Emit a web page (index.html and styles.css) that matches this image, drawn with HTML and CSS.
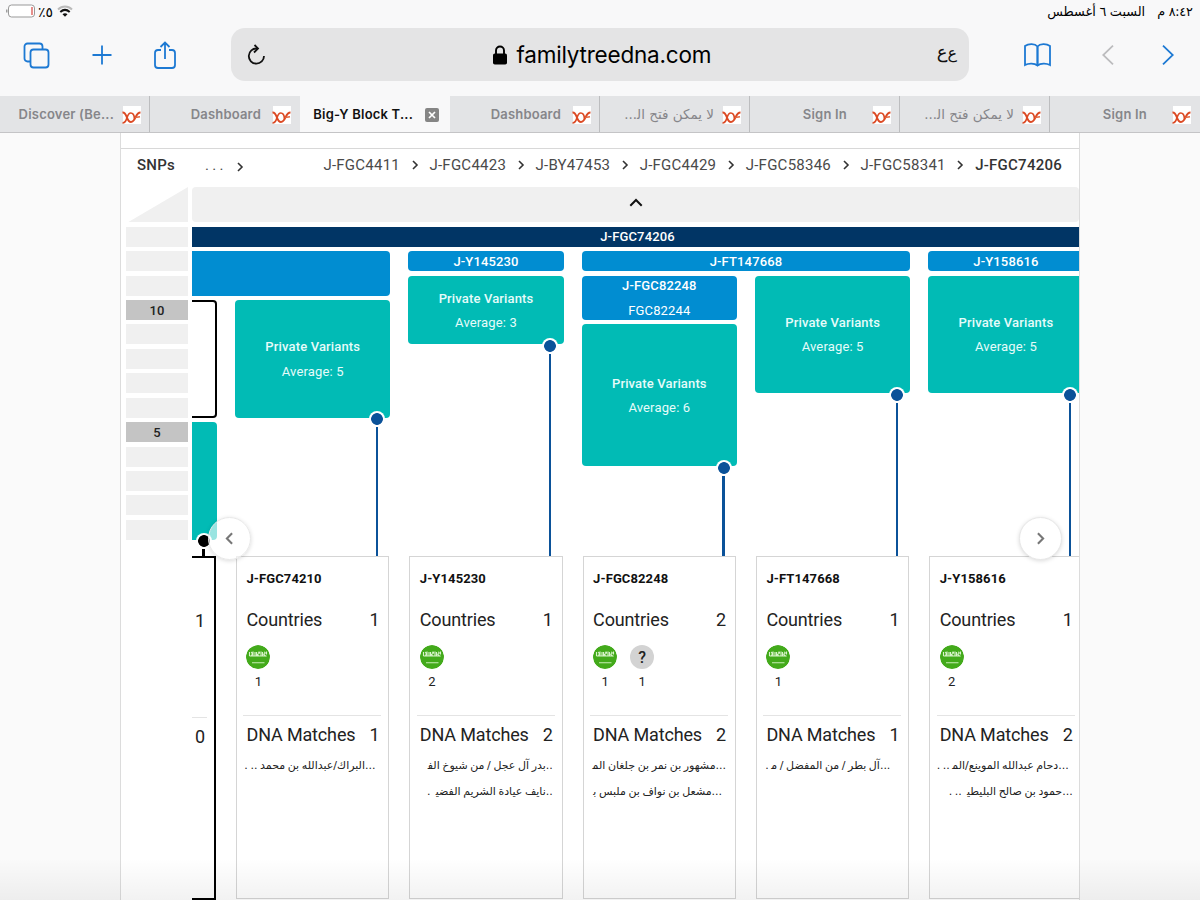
FILE: index.html
```html
<!DOCTYPE html>
<html lang="en">
<head>
    <meta charset="utf-8">
    <title>Big-Y Block Tree</title>
    <link rel="stylesheet" href="styles.css">
</head>
<body>
    <!-- shared icons -->
    <svg class="defs" width="0" height="0">
        <symbol id="dna" viewBox="0 0 19 19">
            <rect x="1" width="18" height="18" fill="#fff"/>
            <path d="M.5 6.500C5.500 6 4 16 9 16c5 0 4-9.500 9.500-9.500" fill="none" stroke="#dc4a24" stroke-width="1.900"/>
            <path d="M.5 17C6 17 4 7 8.800 7c3.500 0 3.500 4 3.700 6" fill="none" stroke="#dc4a24" stroke-width="1.700"/>
            <path d="M13 11.500l5-.7" stroke="#e2653f" stroke-width="1.400"/>
        </symbol>
        <symbol id="chev" viewBox="0 0 8 10">
            <path d="M2 1l4 4-4 4" fill="none" stroke="currentColor" stroke-width="1.600"/>
        </symbol>
        <symbol id="flag" viewBox="0 0 24 24">
            <circle cx="12" cy="12" r="12" fill="#43aa1b"/>
            <path d="M3.500 7v4M5 7.500c1.500-1 1.500 3 0 3.500M7 6.500v4.500h2V7M10.500 7v4M12 7.500c2-1.500 2 1 .2 1.500s0 2 1.300 2M15 6.500v4.500h1.500V7M18 7c2 0 1 2 0 2s1 2.500 2.500 2M20.500 6.500v3M3.500 11h17" fill="none" stroke="#d9f3cb" stroke-width="1.100"/>
            <path d="M6 17.700h12.500" stroke="#c6ecb4" stroke-width="1.100"/>
        </symbol>
    </svg>

    <header class="browser">
        <div class="status">
            <div class="status-side">
                <svg width="30" height="14" viewBox="0 0 30 14">
                    <rect x="2.500" y="1" width="26" height="12" rx="3" fill="#fff" stroke="#999" stroke-width="1"/>
                    <path d="M.8 5.500v3" stroke="#888" stroke-width="1.200"/>
                    <path d="M26 3v8" stroke="#d9534f" stroke-width="1.300"/>
                </svg>
                <bdo dir="ltr" class="percent">٪٥</bdo>
                <svg class="wifi" width="16" height="12" viewBox="0 0 16 12">
                    <path d="M1 4.500c4-4 10-4 14 0" fill="none" stroke="#bbb" stroke-width="1.900"/>
                    <path d="M3.300 7c3-2.700 6.400-2.700 9.400 0" fill="none" stroke="#111" stroke-width="2"/>
                    <path d="M5.500 9.200c1.500-1.300 3.500-1.300 5 0L8 11.700z" fill="#111"/>
                </svg>
            </div>
            <div class="status-side" dir="rtl"><span>٨:٤٢ م</span><span>السبت ٦ أغسطس</span></div>
        </div>

        <div class="toolbar">
            <div class="tools">
                <svg width="27" height="27" viewBox="0 0 27 27">
                    <path d="M7 19.500H4.500a3 3 0 0 1-3-3V4.500a3 3 0 0 1 3-3h12a3 3 0 0 1 3 3V7"/>
                    <rect x="7.500" y="7.500" width="18" height="18" rx="3"/>
                </svg>
                <svg width="20" height="20" viewBox="0 0 20 20"><path d="M10 .5v19M.5 10h19"/></svg>
                <svg width="22" height="28" viewBox="0 0 22 28">
                    <path d="M7 9H4a3 3 0 0 0-3 3v12a3 3 0 0 0 3 3h14a3 3 0 0 0 3-3V12a3 3 0 0 0-3-3h-3M11 18V1.500M6.500 6L11 1.500 15.500 6"/>
                </svg>
            </div>
            <div class="address">
                <svg width="18" height="22" viewBox="0 0 18 22">
                    <path d="M10 4.500A7.600 7.600 0 1 0 17 12M7.500 1l3.500 3.500-4 4" fill="none" stroke="#111" stroke-width="1.800"/>
                </svg>
                <div class="host">
                    <svg width="14" height="20" viewBox="0 0 14 20">
                        <rect y="8.500" width="14" height="11" rx="1.800" fill="#000"/>
                        <path d="M3 9V5.500a4 4 0 0 1 8 0V9" fill="none" stroke="#000" stroke-width="1.900"/>
                    </svg>
                    <span>familytreedna.com</span>
                </div>
                <span class="reader" dir="rtl"><small>ع</small>&zwnj;ع</span>
            </div>
            <div class="tools tools-end">
                <svg width="27" height="24" viewBox="0 0 27 24">
                    <path d="M13.500 3.500C11 .5 4.500.5 1 3v19c3.500-2 9.500-2 12.500.5 3-2.500 9-2.500 12.500-.5V3C22.500.5 16 .5 13.500 3.500zv19"/>
                    <path d="M13.500 3.500v19"/>
                </svg>
                <svg class="off" width="12" height="20" viewBox="0 0 12 20"><path d="M11 .7L1.200 10 11 19.300"/></svg>
                <svg width="12" height="20" viewBox="0 0 12 20"><path d="M1 .7l9.800 9.300L1 19.300"/></svg>
            </div>
        </div>

        <nav class="tabs">
            <div class="tab tab-wide"><span>Discover (Be...</span><svg><use href="#dna"/></svg></div>
            <div class="tab"><span>Dashboard</span><svg><use href="#dna"/></svg></div>
            <div class="tab tab-active"><span>Big-Y Block T...</span>
                <svg class="close" viewBox="0 0 14 14"><rect width="14" height="14" rx="2" fill="#858585"/><path d="M4 4l6 6M10 4l-6 6" stroke="#fff" stroke-width="1.700"/></svg>
            </div>
            <div class="tab"><span>Dashboard</span><svg><use href="#dna"/></svg></div>
            <div class="tab tab-wide"><span class="ar" dir="rtl">لا يمكن فتح ال&zwj;...</span><svg><use href="#dna"/></svg></div>
            <div class="tab tab-short"><span>Sign In</span><svg><use href="#dna"/></svg></div>
            <div class="tab tab-wide"><span class="ar" dir="rtl">لا يمكن فتح ال&zwj;...</span><svg><use href="#dna"/></svg></div>
            <div class="tab tab-short"><span>Sign In</span><svg><use href="#dna"/></svg></div>
        </nav>
    </header>

    <main class="page">
        <div class="crumbs">
            <b>SNPs</b>
            <span class="dots">...</span>
            <svg class="first"><use href="#chev"/></svg>
            <div class="path">
                <span>J-FGC4411</span><svg><use href="#chev"/></svg>
                <span>J-FGC4423</span><svg><use href="#chev"/></svg>
                <span>J-BY47453</span><svg><use href="#chev"/></svg>
                <span>J-FGC4429</span><svg><use href="#chev"/></svg>
                <span>J-FGC58346</span><svg><use href="#chev"/></svg>
                <span>J-FGC58341</span><svg><use href="#chev"/></svg>
                <b>J-FGC74206</b>
            </div>
        </div>

        <div class="chart">
            <div class="ruler">
                <div class="corner"></div>
                <i></i><i></i><i></i><i class="mark">10</i><i></i><i></i><i></i><i></i><i class="mark">5</i><i></i><i></i><i></i><i></i>
            </div>

            <div class="view">
                <div class="up"><svg width="14" height="9" viewBox="0 0 14 9"><path d="M1.300 7.700L7 2l5.700 5.700" fill="none" stroke="#111" stroke-width="2"/></svg></div>

                <div class="tree">
                    <div class="block root">J-FGC74206</div>
                    <div class="block blue first-blue"></div>
                    <div class="block blue c3 r2">J-Y145230</div>
                    <div class="block blue c45 r2">J-FT147668</div>
                    <div class="block blue c6 r2">J-Y158616</div>
                    <div class="block blue c4 r34">J-FGC82248<span>FGC82244</span></div>

                    <div class="block outline"></div>
                    <div class="block teal cut"></div>
                    <div class="block teal c2 r48">Private Variants<span>Average: 5</span></div>
                    <div class="block teal c3 r35">Private Variants<span>Average: 3</span></div>
                    <div class="block teal c4 r510">Private Variants<span>Average: 6</span></div>
                    <div class="block teal c5 r37">Private Variants<span>Average: 5</span></div>
                    <div class="block teal c6 r37">Private Variants<span>Average: 5</span></div>

                    <div class="stem stem-black c1 s14"></div>
                    <div class="stem c2 s9"></div>
                    <div class="stem c3 s6"></div>
                    <div class="stem c4 s11"></div>
                    <div class="stem c5 s8"></div>
                    <div class="stem c6 s8"></div>
                </div>

                <div class="cards">
                    <section class="card card-cut">
                        <div class="countries"><h3><b>1</b></h3></div>
                        <h3><b>0</b></h3>
                    </section>
                    <section class="card">
                        <h2>J-FGC74210</h2>
                        <div class="countries">
                            <h3>Countries <b>1</b></h3>
                            <div class="flags"><div><svg><use href="#flag"/></svg>1</div></div>
                        </div>
                        <h3>DNA Matches <b>1</b></h3>
                        <p dir="rtl" class="in">...البراك/عبدالله بن محمد .. .</p>
                    </section>
                    <section class="card">
                        <h2>J-Y145230</h2>
                        <div class="countries">
                            <h3>Countries <b>1</b></h3>
                            <div class="flags"><div><svg><use href="#flag"/></svg>2</div></div>
                        </div>
                        <h3>DNA Matches <b>2</b></h3>
                        <p dir="rtl">..بدر آل عجل / من شيوخ الف&zwj;</p>
                        <p dir="rtl">..نايف عيادة الشريم الفضي&zwj; &nbsp;.</p>
                    </section>
                    <section class="card">
                        <h2>J-FGC82248</h2>
                        <div class="countries">
                            <h3>Countries <b>2</b></h3>
                            <div class="flags"><div><svg><use href="#flag"/></svg>1</div><div><em>?</em>1</div></div>
                        </div>
                        <h3>DNA Matches <b>2</b></h3>
                        <p dir="rtl">...مشهور بن نمر بن جلغان الم&zwj;</p>
                        <p dir="rtl" class="in">...مشعل بن نواف بن ملبس ب&zwj;</p>
                    </section>
                    <section class="card">
                        <h2>J-FT147668</h2>
                        <div class="countries">
                            <h3>Countries <b>1</b></h3>
                            <div class="flags"><div><svg><use href="#flag"/></svg>1</div></div>
                        </div>
                        <h3>DNA Matches <b>1</b></h3>
                        <p dir="rtl" class="in2">...آل بطر / من المفضل / م&zwj; .</p>
                    </section>
                    <section class="card">
                        <h2>J-Y158616</h2>
                        <div class="countries">
                            <h3>Countries <b>1</b></h3>
                            <div class="flags"><div><svg><use href="#flag"/></svg>2</div></div>
                        </div>
                        <h3>DNA Matches <b>2</b></h3>
                        <p dir="rtl" class="in">...دحام عبدالله الموينع/الم&zwj; .. .</p>
                        <p dir="rtl">...حمود بن صالح البليطي&zwj; &nbsp;.. .</p>
                    </section>
                </div>

                <button class="nav prev"><svg><use href="#chev"/></svg></button>
                <button class="nav next"><svg><use href="#chev"/></svg></button>
            </div>
        </div>
    </main>
    <div class="fade"></div>
</body>
</html>
```
FILE: styles.css
```css
* {
    box-sizing: border-box;
}

body {
    margin: 0;
    width: 1200px;
    height: 900px;
    overflow: hidden;
    position: relative;
    background: #fafafa;
    font-family: Roboto, "DejaVu Sans", sans-serif;
    color: #222;
}

.defs {
    position: absolute;
}

/* browser chrome */
.browser {
    height: 133px;
    background: #f8f8f9;
    border-bottom: 1px solid #c4c4c6;
    font-family: Inter, "DejaVu Sans", sans-serif;
}

.status {
    height: 28px;
    padding: 0 7px 6px 6px;
    display: flex;
    justify-content: space-between;
    align-items: center;
    font-size: 12.8px;
    color: #000;
}

.status-side {
    display: flex;
    align-items: center;
    gap: 12px;
}

.status-side .percent {
    margin-left: -10px;
    font-size: 14px;
}

.status-side .wifi {
    margin-left: -8px;
}

.toolbar {
    height: 68px;
    display: flex;
    align-items: flex-start;
}

.tools {
    width: 231px;
    height: 54px;
    padding-left: 23px;
    display: flex;
    align-items: center;
    gap: 42px;
}

.tools svg {
    fill: none;
    stroke: #1d79d3;
    stroke-width: 1.8;
}

.tools svg:nth-child(3) {
    margin-bottom: 1px;
}

.tools-end {
    padding-left: 55px;
    gap: 51px;
}

.tools-end svg:nth-child(3) {
    margin: 0 0 0 -3px;
}

.tools .off {
    stroke: #bcbcbe;
}

.address {
    width: 738px;
    height: 53px;
    padding: 0 12px 0 16px;
    border-radius: 14px;
    background: #e4e4e5;
    display: flex;
    align-items: center;
    justify-content: space-between;
}

.host {
    display: flex;
    align-items: center;
    gap: 9px;
    padding-left: 3px;
    font-size: 22.5px;
    letter-spacing: -0.2px;
    color: #000;
}

.reader {
    padding-bottom: 6px;
    font-size: 18px;
    color: #111;
}

.reader small {
    font-size: 16px;
}

.tabs {
    display: flex;
    height: 36px;
}

.tab {
    width: 150px;
    padding-right: 8px;
    display: flex;
    align-items: center;
    justify-content: flex-end;
    gap: 11px;
    background: #e3e4e6;
    border-right: 1px solid #bcbdbf;
    color: #86868a;
    font-size: 13px;
    font-weight: 600;
    letter-spacing: 0.2px;
    white-space: nowrap;
}

.tab:nth-child(2),
.tab:last-child,
.tab-active {
    border-right-color: transparent;
}

.tab svg {
    width: 19px;
    height: 19px;
    margin-top: 2px;
}

.tab-wide {
    gap: 8px;
}

.tab-short {
    gap: 25px;
}

.tab .ar {
    font: 13.5px "DejaVu Sans", sans-serif;
    letter-spacing: 0;
}

.tab-active {
    background: #f8f8f9;
    color: #111;
    gap: 12px;
    padding-right: 10px;
}

.tab .close {
    width: 14px;
    height: 14px;
}

/* page */
.page {
    width: 960px;
    height: 767px;
    margin-left: 120px;
    padding-top: 15px;
    background: #fff;
    border: solid #dcdcdc;
    border-width: 0 1px;
    overflow: hidden;
}

.crumbs {
    height: 39px;
    padding: 0 17px 6px 16px;
    border-top: 1px solid #d8d8d8;
    display: flex;
    align-items: center;
    font-size: 15px;
    letter-spacing: 0.25px;
    color: #4a4a4a;
}

.crumbs b {
    font-weight: 500;
    color: #333;
}

.crumbs svg {
    width: 8px;
    height: 10px;
    color: #333;
}

.dots {
    margin-left: 30px;
    letter-spacing: 3.3px;
}

.crumbs .first {
    margin-left: 9px;
    margin-top: 3px;
}

.path {
    margin-left: auto;
    display: flex;
    align-items: center;
    gap: 10.7px;
}

.chart {
    display: flex;
    gap: 4px;
    padding-left: 5px;
}

.ruler {
    width: 62px;
    display: flex;
    flex-direction: column;
    gap: 4.43px;
}

.ruler i {
    height: 20px;
    background: #f0f0f0;
    font: 500 13px/21px Roboto, sans-serif;
    letter-spacing: 0.2px;
    text-align: center;
}

.ruler .mark {
    background: #c4c4c4;
}

.corner {
    height: 35.3px;
    margin-left: 2px;
    background: #f0f0f0;
    clip-path: polygon(100% 0, 100% 100%, 0 100%);
}

.view {
    width: 887px;
    position: relative;
    overflow: hidden;
}

.up {
    height: 35px;
    margin-bottom: 4.7px;
    padding-bottom: 5px;
    border-radius: 4px;
    background: #f0f0f0;
    display: flex;
    align-items: center;
    justify-content: center;
}

.tree,
.cards {
    display: grid;
    grid-template-columns: 25.2px repeat(5, 155.5px);
    column-gap: 17.8px;
}

.tree {
    grid-template-rows: repeat(13, 20px) 11.7px;
    row-gap: 4.43px;
}

.block {
    padding-top: 2px;
    display: flex;
    flex-direction: column;
    justify-content: center;
    border-radius: 4px;
    color: #fff;
    font-size: 13px;
    font-weight: 500;
    line-height: 24.4px;
    letter-spacing: 0.15px;
    text-align: center;
}

.block span {
    font-weight: 400;
}

.root {
    grid-area: 1 / 1 / 2 / 7;
    width: 891px;
    background: #013565;
    border-radius: 0;
}

.blue { background: #018dd1; }
.teal { background: #01bbb5; color: #e6fbfa; }

.first-blue {
    grid-area: 2 / 1 / 4 / 3;
    border-radius: 0 4px 4px 0;
}

.outline {
    grid-area: 4 / 1 / 9 / 2;
    border: 2.5px solid #000;
    border-left: 0;
    border-radius: 0 4px 4px 0;
}

.cut {
    grid-area: 9 / 1 / 14 / 2;
    border-radius: 0 4px 4px 0;
}

.c1 { grid-column: 1; }
.c2 { grid-column: 2; }
.c3 { grid-column: 3; }
.c4 { grid-column: 4; }
.c5 { grid-column: 5; }
.c6 { grid-column: 6; }
.c45 { grid-column: 4 / 6; }

.r2 { grid-row: 2; }
.r34 { grid-row: 3 / 5; }
.r35 { grid-row: 3 / 6; }
.r37 { grid-row: 3 / 8; }
.r48 { grid-row: 4 / 9; }
.r510 { grid-row: 5 / 11; }

/* line with the dot on top, hanging from a block */
.stem {
    --c: #0b5299;
    position: relative;
    justify-self: end;
    width: 2.5px;
    margin-right: 12.3px;
    background: var(--c);
    border-top: 5px solid #fff;
}

.stem::before {
    content: '';
    position: absolute;
    top: -16px;
    left: -6.75px;
    width: 16px;
    height: 16px;
    border-radius: 50%;
    background: radial-gradient(circle, var(--c) 5.5px, #fff 6.2px);
}

.stem-black { --c: #000; }

.s6 { grid-row: 6 / 15; }
.s8 { grid-row: 8 / 15; }
.s9 { grid-row: 9 / 15; }
.s11 { grid-row: 11 / 15; }
.s14 { grid-row: 14; }

/* cards */
.card {
    height: 343px;
    margin: 0 1px;
    padding: 12px 7px 0 6.5px;
    border: 1.5px solid #d5d5d5;
    color: #222;
}

.card h2 {
    margin: 0 3px;
    font-size: 13px;
    line-height: 20px;
    font-weight: 700;
    letter-spacing: 0.1px;
    color: #111;
}

.card h3 {
    margin: 0 2px 0 3px;
    display: flex;
    justify-content: space-between;
    font-size: 18px;
    line-height: 26px;
    font-weight: 400;
    letter-spacing: -0.15px;
}

.card b {
    font-weight: 400;
}

.countries {
    height: 127px;
    padding-top: 18px;
    margin-bottom: 6px;
    border-bottom: 1px solid #e4e4e4;
}

.flags {
    margin: 12px 3px 0;
    display: flex;
    gap: 13px;
}

.flags div {
    width: 24px;
    text-align: center;
    font-size: 13px;
    line-height: 25px;
}

.flags svg,
.flags em {
    display: block;
    width: 24px;
    height: 24px;
    border-radius: 50%;
}

.flags em {
    background: #d3d3d3;
    font: 500 16px/25px Roboto, sans-serif;
}

.card p {
    margin: 5.5px 2px 0;
    height: 21px;
    font: 11px/21px "DejaVu Sans", sans-serif;
    word-spacing: -0.9px;
    white-space: nowrap;
}

.card h3 + p {
    margin-top: 7px;
}

.card .in { margin-right: 6px; }
.card .in2 { margin-right: 11px; }

.card-cut {
    height: 344px;
    margin: 0 1px 0 0;
    padding: 32px 7px 0 0;
    border: 2.5px solid #000;
    border-left: 0;
}

.card-cut h3 {
    margin: 0 0 0 3px;
}

.card-cut .countries {
    height: 128px;
}

.nav {
    position: absolute;
    top: 330px;
    width: 43px;
    height: 43px;
    padding: 0;
    border: 1px solid #e8e8e8;
    border-radius: 50%;
    background: #fff;
    box-shadow: 0 1px 4px rgba(0,0,0,0.15);
    color: #777;
    display: flex;
    align-items: center;
    justify-content: center;
}

.nav svg {
    width: 11px;
    height: 13px;
}

.prev {
    left: 16px;
    background: rgba(255,255,255,0.6);
}

.prev svg {
    transform: scaleX(-1);
}

.next {
    left: 827px;
}

.fade {
    position: absolute;
    left: 0;
    right: 0;
    bottom: 0;
    height: 42px;
    background: linear-gradient(rgba(0,0,0,0), rgba(0,0,0,0.05));
}
```
